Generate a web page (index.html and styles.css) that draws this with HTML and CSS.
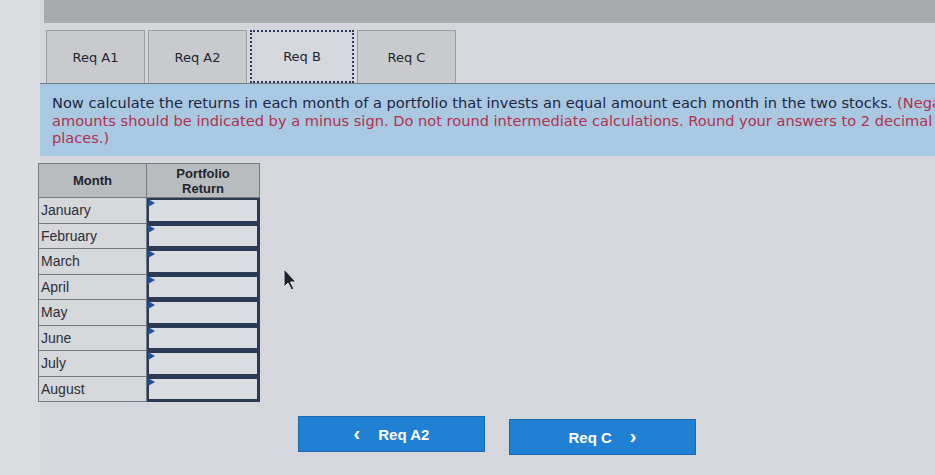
FILE: index.html
```html
<!DOCTYPE html>
<html>
<head>
<meta charset="utf-8">
<link rel="stylesheet" href="styles.css">
</head>
<body>
<div class="page">
  <div class="topbar"></div>
  <div class="tabs">
    <div class="tab">Req A1</div>
    <div class="tab">Req A2</div>
    <div class="tab active">Req B</div>
    <div class="tab">Req C</div>
  </div>
  <div class="instructions">
    <p><span class="lead">Now calculate the returns in each month of a portfolio that invests an equal amount each month in the two stocks.</span> <span class="note">(Negative amounts should be indicated by a minus sign. Do not round intermediate calculations. Round your answers to 2 decimal places.)</span></p>
  </div>
  <table class="grid">
    <thead>
      <tr><th class="c-month">Month</th><th class="c-ret">Portfolio<br>Return</th></tr>
    </thead>
    <tbody>
      <tr><td class="m">January</td><td class="in"><div class="box"><span class="flag"></span></div></td></tr>
      <tr><td class="m">February</td><td class="in"><div class="box"><span class="flag"></span></div></td></tr>
      <tr><td class="m">March</td><td class="in"><div class="box"><span class="flag"></span></div></td></tr>
      <tr><td class="m">April</td><td class="in"><div class="box"><span class="flag"></span></div></td></tr>
      <tr><td class="m">May</td><td class="in"><div class="box"><span class="flag"></span></div></td></tr>
      <tr><td class="m">June</td><td class="in"><div class="box"><span class="flag"></span></div></td></tr>
      <tr><td class="m">July</td><td class="in"><div class="box"><span class="flag"></span></div></td></tr>
      <tr><td class="m">August</td><td class="in"><div class="box"><span class="flag"></span></div></td></tr>
    </tbody>
  </table>
  <div class="nav">
    <div class="btn prev"><span class="chev">&lsaquo;</span><span>Req A2</span></div>
    <div class="btn next"><span>Req C</span><span class="chev">&rsaquo;</span></div>
  </div>
  <svg class="cursor" width="16" height="24" viewBox="0 0 16 24"><path d="M1 1 L1 19 L5 15 L8.5 22 L11 21 L7.5 14 L13 14 Z" fill="#1c2230" stroke="#e8eaee" stroke-width="1"/></svg>
</div>
</body>
</html>
```
FILE: styles.css
```css
html, body {
  margin: 0;
  padding: 0;
}
body {
  background: #d6d8dd;
  overflow: hidden;
  width: 935px;
  height: 475px;
}
.page {
  position: relative;
  width: 935px;
  height: 475px;
  overflow: hidden;
  background: linear-gradient(90deg, #dcdde0 0, #dcdde0 40px, #d5d7dc 40px);
}
.topbar {
  margin-left: 44px;
  height: 23px;
  background: #a8abab;
}
.tabs {
  display: flex;
  gap: 3px;
  margin: 7px 0 0 46px;
  height: 53px;
}
.tab {
  width: 99px;
  box-sizing: border-box;
  border: 1px solid #9c9fa2;
  border-bottom: none;
  background: #c8cacd;
  font-family: "DejaVu Sans", Verdana, sans-serif;
  font-size: 13px;
  color: #1e2530;
  display: flex;
  align-items: center;
  justify-content: center;
}
.tab.active {
  width: 104px;
  background: #d4d7dd;
  border: 2px dotted #2a3a5a;
}
.instructions {
  margin-left: 40px;
  width: 1000px;
  border-top: 1px solid #6e7d8a;
  background: #a9c8e1;
  box-sizing: border-box;
  height: 73px;
  padding: 10px 0 0 12px;
}
.instructions p {
  margin: 0;
  width: 928px;
  font-family: "DejaVu Sans", Verdana, sans-serif;
  font-size: 14.6px;
  line-height: 17.5px;
}
.lead { color: #1c2743; }
.note { color: #b2314f; }
.grid {
  margin: 7px 0 0 38px;
  border-collapse: collapse;
  font-family: "Liberation Sans", Arial, sans-serif;
}
.grid th {
  background: #b9bcbf;
  border: 1px solid #737a82;
  font-size: 13px;
  font-weight: bold;
  color: #20252e;
  height: 33px;
  padding: 0;
  line-height: 15px;
}
.c-month { width: 107px; }
.c-ret { width: 112px; }
.grid td {
  border: 1px solid #737a82;
  height: 24.5px;
  padding: 0;
  background: #d5d7db;
}
.grid td.m {
  font-size: 14px;
  color: #2a2f38;
  padding-left: 2px;
}
.grid td.in {
  padding: 0;
  border-color: #2b3a55;
}
.box {
  position: relative;
  box-sizing: border-box;
  height: 24.5px;
  border: 2px solid #2b3a55;
  background: #d9dce1;
}
.flag {
  position: absolute;
  left: -1px;
  top: -1px;
  width: 0;
  height: 0;
  border-top: 4px solid transparent;
  border-bottom: 4px solid transparent;
  border-left: 7px solid #23509a;
}
.nav {
  display: flex;
  gap: 24px;
  margin: 14px 0 0 298px;
}
.btn {
  width: 187px;
  height: 36px;
  background: #2080d3;
  border: 1px solid #1968b0;
  box-sizing: border-box;
  color: #ffffff;
  font-family: "Liberation Sans", Arial, sans-serif;
  font-weight: bold;
  font-size: 15px;
  display: flex;
  align-items: center;
  justify-content: center;
  gap: 18px;
}
.btn.next { margin-top: 3px; }
.chev {
  font-size: 20px;
  line-height: 20px;
  margin-top: -3px;
}
.cursor {
  position: absolute;
  left: 283px;
  top: 268px;
}
```
